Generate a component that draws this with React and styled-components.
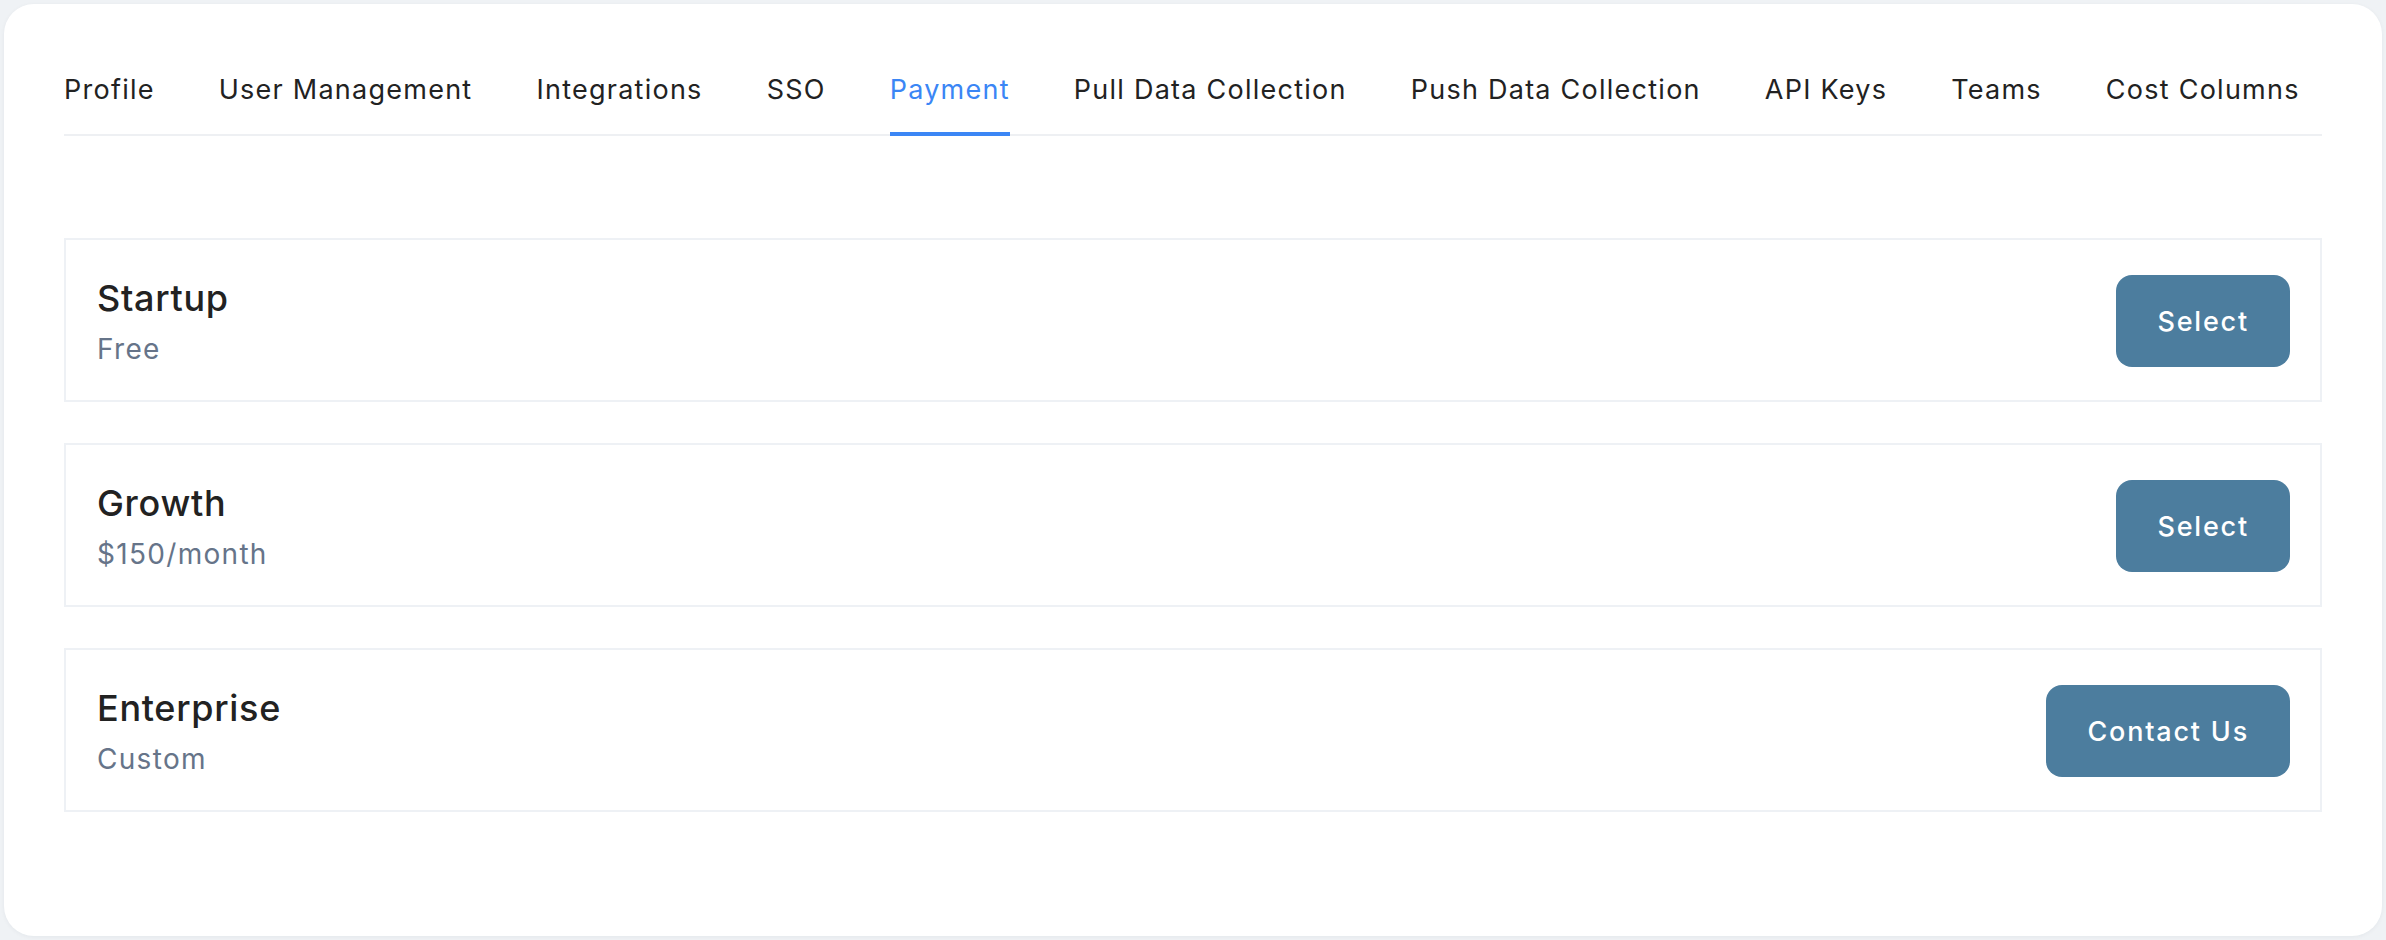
import React from "react";
import styled, { createGlobalStyle } from "styled-components";

const GlobalStyle = createGlobalStyle`
  * { box-sizing: border-box; }
  html, body { margin: 0; padding: 0; }
  body {
    background: #eff2f5;
    font-family: Inter, "Noto Sans", "Liberation Sans", sans-serif;
    color: #222222;
  }
`;

const Page = styled.div`
  padding: 4px;
`;

const Panel = styled.div`
  background: #ffffff;
  border-radius: 30px;
  height: 932px;
  padding: 66px 60px 0;
  box-shadow: 0 1px 4px rgba(20, 30, 50, 0.05);
`;

const TabBar = styled.nav`
  display: flex;
  gap: 64px;
  border-bottom: 2px solid #eef0f3;
`;

const Tab = styled.div`
  font-size: 27px;
  line-height: 40px;
  font-weight: 400;
  letter-spacing: 1.25px;
  padding-bottom: 22px;
  margin-bottom: -2px;
  white-space: nowrap;
  color: ${(p) => (p.$active ? "#3b86f5" : "#222222")};
  border-bottom: 4px solid ${(p) => (p.$active ? "#3b86f5" : "transparent")};
  cursor: pointer;
`;

const PlanList = styled.div`
  margin-top: 102px;
  display: flex;
  flex-direction: column;
  gap: 41px;
`;

const PlanCard = styled.div`
  height: 164px;
  border: 2px solid #eef1f5;
  display: flex;
  align-items: center;
  justify-content: space-between;
  padding: 2px 30px 0 31px;
`;

const PlanInfo = styled.div`
  display: flex;
  flex-direction: column;
`;

const PlanName = styled.div`
  font-size: 36px;
  line-height: 48px;
  font-weight: 500;
  letter-spacing: 0.7px;
  color: #222222;
`;

const PlanPrice = styled.div`
  margin-top: 7px;
  font-size: 28px;
  line-height: 40px;
  font-weight: 400;
  letter-spacing: 1.3px;
  color: #667489;
`;

const ActionButton = styled.button`
  height: 92px;
  padding: 0 41px;
  border: none;
  border-radius: 16px;
  background: #4c7d9e;
  color: #ffffff;
  font-family: inherit;
  font-size: 27px;
  font-weight: 500;
  letter-spacing: 1.8px;
  cursor: pointer;
`;

const tabs = [
  "Profile",
  "User Management",
  "Integrations",
  "SSO",
  "Payment",
  "Pull Data Collection",
  "Push Data Collection",
  "API Keys",
  "Teams",
  "Cost Columns",
];

const plans = [
  { name: "Startup", price: "Free", action: "Select" },
  { name: "Growth", price: "$150/month", action: "Select" },
  { name: "Enterprise", price: "Custom", action: "Contact Us" },
];

export default function App() {
  return (
    <>
      <GlobalStyle />
      <Page>
        <Panel>
          <TabBar>
            {tabs.map((t) => (
              <Tab key={t} $active={t === "Payment"}>
                {t}
              </Tab>
            ))}
          </TabBar>
          <PlanList>
            {plans.map((p) => (
              <PlanCard key={p.name}>
                <PlanInfo>
                  <PlanName>{p.name}</PlanName>
                  <PlanPrice>{p.price}</PlanPrice>
                </PlanInfo>
                <ActionButton>{p.action}</ActionButton>
              </PlanCard>
            ))}
          </PlanList>
        </Panel>
      </Page>
    </>
  );
}
